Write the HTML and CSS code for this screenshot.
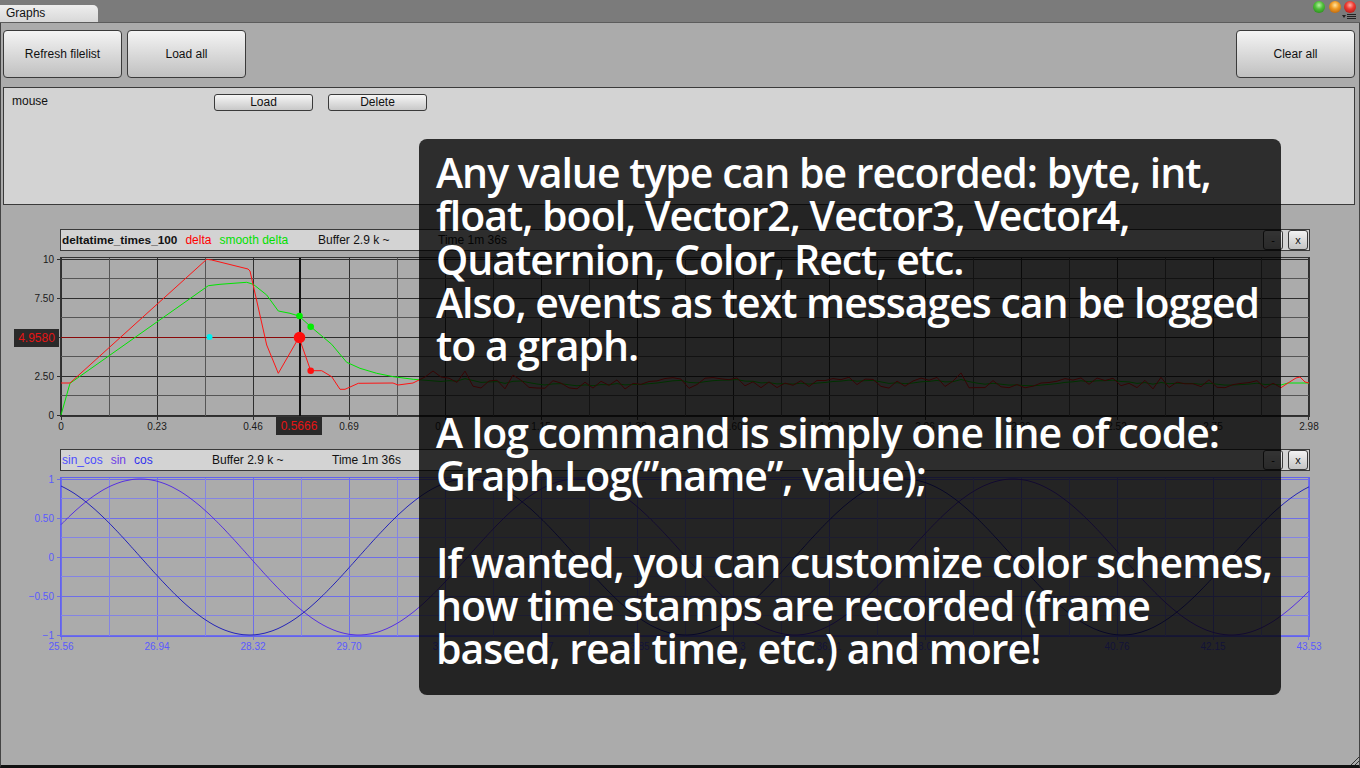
FILE: index.html
```html
<!DOCTYPE html>
<html>
<head>
<meta charset="utf-8">
<title>Graphs</title>
<link rel="stylesheet" href="styles.css">
</head>
<body>
<div class="tabbar">
  <div class="tab">Graphs</div>
  <div class="winctl">
    <div class="lights"><span class="light green"></span><span class="light orange"></span><span class="light red"></span></div>
    <svg class="menuicon" width="14" height="6" viewBox="0 0 14 6"><path d="M0 1h4l-2 3z" fill="#222"/><path d="M5 0.5h9M5 2.5h9M5 4.5h9" stroke="#222" stroke-width="1"/></svg>
  </div>
</div>
<div class="window">
  <div class="toolbar">
    <button class="btn big">Refresh filelist</button>
    <button class="btn big">Load all</button>
    <div class="spacer"></div>
    <button class="btn big">Clear all</button>
  </div>
  <div class="filelist">
    <div class="filerow"><span class="fname">mouse</span><button class="btn small">Load</button><button class="btn small">Delete</button></div>
  </div>

  <div class="graph first">
    <div class="ghead">
      <span class="series w1"><span class="gname">deltatime_times_100</span><span class="s c-red">delta</span><span class="s c-green">smooth delta</span></span>
      <span class="buf">Buffer 2.9 k ~</span>
      <span class="time">Time 1m 36s</span>
      <span class="hbtns"><button class="hbtn">-</button><button class="hbtn">x</button></span>
    </div>
    <div class="gbody">
      <div class="yaxis dark"><span>10</span><span>7.50</span><span></span><span>2.50</span><span>0</span></div>
      <svg class="plot" width="1255" height="164" viewBox="56 257 1255 164">
        <path d="M61.5 258v158M157.5 258v158M253.5 258v158M349.5 258v158M445.5 258v158M541.5 258v158M637.5 258v158M733.5 258v158M829.5 258v158M925.5 258v158M1021.5 258v158M1117.5 258v158M1213.5 258v158M1308.5 258v158M61 259.5h1248M61 298.5h1248M61 376.5h1248M61 415.5h1248" stroke="#2e2e2e" stroke-width="1" fill="none"/>
        <path d="M109.5 258v158M205.5 258v158M397.5 258v158M493.5 258v158M589.5 258v158M685.5 258v158M781.5 258v158M877.5 258v158M973.5 258v158M1069.5 258v158M1165.5 258v158M1261.5 258v158M61 278.5h1248M61 317.5h1248M61 356.5h1248M61 395.5h1248" stroke="#555" stroke-width="1" fill="none"/>
        <path d="M299.5 337.5H1309" stroke="#2e2e2e" stroke-width="1"/>
        <path d="M57 259.5h4M57 298.5h4M57 337.5h4M57 376.5h4M57 415.5h4M61.5 416v4M157.5 416v4M253.5 416v4M349.5 416v4M445.5 416v4M541.5 416v4M637.5 416v4M733.5 416v4M829.5 416v4M925.5 416v4M1021.5 416v4M1117.5 416v4M1213.5 416v4M1308.5 416v4" stroke="#2e2e2e" stroke-width="1"/>
        <rect x="60.5" y="257.5" width="1249" height="159" fill="none" stroke="#333"/>
        <path d="M61 337.5H299" stroke="#8a0a0a" stroke-width="1"/>
        <path d="M300 258V416" stroke="#111" stroke-width="2"/>
        <polyline id="green" fill="none" stroke="#00e600" stroke-width="1" points=""/>
        <polyline id="red" fill="none" stroke="#ff1414" stroke-width="1" points=""/>
        <circle cx="209.5" cy="337" r="3" fill="#00f0f0"/>
        <circle cx="299.5" cy="316" r="3.3" fill="#00ee00"/>
        <circle cx="310.7" cy="326.7" r="3.3" fill="#00ee00"/>
        <circle cx="310.7" cy="370.7" r="3.3" fill="#ff1010"/>
        <circle cx="299.5" cy="337.5" r="5.8" fill="#ff0d0d"/>
      </svg>
    </div>
    <div class="xaxis dark"><span>0</span><span>0.23</span><span>0.46</span><span>0.69</span><span>0.92</span><span>1.15</span><span>1.38</span><span>1.60</span><span>1.83</span><span>2.06</span><span>2.29</span><span>2.52</span><span>2.75</span><span>2.98</span></div>
    <div class="tag tag-y">4.9580</div>
    <div class="tag tag-x">0.5666</div>
  </div>

  <div class="graph">
    <div class="ghead">
      <span class="series w2"><span class="s0 c-blue1">sin_cos</span><span class="s c-sin">sin</span><span class="s c-cos">cos</span></span>
      <span class="buf">Buffer 2.9 k ~</span>
      <span class="time">Time 1m 36s</span>
      <span class="hbtns"><button class="hbtn">-</button><button class="hbtn">x</button></span>
    </div>
    <div class="gbody">
      <div class="yaxis blue"><span>1</span><span>0.50</span><span>0</span><span>&minus;0.50</span><span>&minus;1</span></div>
      <svg class="plot" width="1255" height="164" viewBox="56 477 1255 164">
        <path d="M61.5 478v158M157.5 478v158M253.5 478v158M349.5 478v158M445.5 478v158M541.5 478v158M637.5 478v158M733.5 478v158M829.5 478v158M925.5 478v158M1021.5 478v158M1117.5 478v158M1213.5 478v158M1308.5 478v158M61 479.5h1248M61 518.5h1248M61 557.5h1248M61 596.5h1248M61 635.5h1248" stroke="#6e6ee8" stroke-width="1" fill="none"/>
        <path d="M109.5 478v158M205.5 478v158M301.5 478v158M397.5 478v158M493.5 478v158M589.5 478v158M685.5 478v158M781.5 478v158M877.5 478v158M973.5 478v158M1069.5 478v158M1165.5 478v158M1261.5 478v158M61 498.5h1248M61 537.5h1248M61 576.5h1248M61 615.5h1248" stroke="#8484e4" stroke-width="1" fill="none"/>
        <path d="M57 479.5h4M57 518.5h4M57 557.5h4M57 596.5h4M57 635.5h4M61.5 636v4M157.5 636v4M253.5 636v4M349.5 636v4M445.5 636v4M541.5 636v4M637.5 636v4M733.5 636v4M829.5 636v4M925.5 636v4M1021.5 636v4M1117.5 636v4M1213.5 636v4M1308.5 636v4" stroke="#6e6ee8" stroke-width="1"/>
        <rect x="60.5" y="477.5" width="1249" height="159" fill="none" stroke="#6262ee"/>
        <polyline id="sin" fill="none" stroke="#5630e0" stroke-width="1" points=""/>
        <polyline id="cos" fill="none" stroke="#2424b8" stroke-width="1" points=""/>
      </svg>
    </div>
    <div class="xaxis blue"><span>25.56</span><span>26.94</span><span>28.32</span><span>29.70</span><span>31.08</span><span>32.47</span><span>33.85</span><span>35.23</span><span>36.61</span><span>38.00</span><span>39.38</span><span>40.76</span><span>42.15</span><span>43.53</span></div>
  </div>

  <svg class="grip" width="9" height="9" viewBox="0 0 9 9"><path d="M1 9L9 1M5 9L9 5" stroke="#333" stroke-width="1"/></svg>
</div>

<div class="overlay">Any value type can be recorded: byte, int,<br>float, bool, Vector2, Vector3, Vector4,<br>Quaternion, Color, Rect, etc.<br>Also, events as text messages can be logged<br>to a graph.<br><br>A log command is simply one line of code:<br>Graph.Log(”name”, value);<br><br>If wanted, you can customize color schemes,<br>how time stamps are recorded (frame<br>based, real time, etc.) and more!</div>

<script src="script.js"></script>
</body>
</html>
```

FILE: styles.css
```css
* { box-sizing: border-box; }
html, body { margin: 0; height: 768px; overflow: hidden; }
body {
  background: #ababab;
  font-family: "Liberation Sans", Arial, sans-serif;
  font-size: 12px;
  color: #111;
  position: relative;
}

/* tab bar */
.tabbar {
  height: 23px;
  background: #7b7b7b;
  border-bottom: 1px solid #5c5c5c;
  display: flex;
  justify-content: space-between;
  align-items: flex-end;
}
.tab {
  width: 98px;
  height: 17px;
  background: linear-gradient(#eeeeee, #d8d8d8);
  border-top-right-radius: 5px;
  padding-left: 6px;
  line-height: 17px;
  font-size: 12px;
  color: #111;
}
.winctl {
  align-self: flex-start;
  display: flex;
  flex-direction: column;
  align-items: flex-end;
  padding: 0 4px 0 0;
}
.lights { display: flex; gap: 3.5px; margin-top: 1px; }
.light { width: 12px; height: 12px; border-radius: 50%; display: block; }
.light.green { background: radial-gradient(circle at 50% 35%, #b6f0a0 0, #4fbf3a 40%, #1f7a14 100%); }
.light.orange { background: radial-gradient(circle at 50% 35%, #ffe3a0 0, #f09a22 40%, #a8550a 100%); }
.light.red { background: radial-gradient(circle at 50% 35%, #ffb0a8 0, #ee3a30 40%, #9a1010 100%); }
.menuicon { display: block; margin-top: 1px; margin-right: 0; }

/* window */
.window {
  height: 745px;
  border-left: 1px solid #444;
  border-right: 1px solid #444;
  border-bottom: 3px solid #111;
  padding: 7px 4px 0 2px;
  position: relative;
}
.toolbar { display: flex; gap: 5px; }
.spacer { flex: 1; }
.btn {
  font-family: "Liberation Sans", Arial, sans-serif;
  font-size: 12px;
  color: #111;
  border: 1px solid #3a3a3a;
  border-radius: 4px;
  background: linear-gradient(#f4f4f4, #c0c0c0);
  padding: 0;
  margin: 0;
}
.btn.big { width: 119px; height: 48px; }
.btn.small { width: 99px; height: 17px; border-radius: 3px; line-height: 15px; background: linear-gradient(#f6f6f6, #c8c8c8); }
.btn.small + .btn.small { margin-left: 15px; }

.filelist {
  margin-top: 9px;
  height: 118px;
  border: 1px solid #3a3a3a;
  background: #d3d3d3;
  padding: 6px 0 0 8px;
}
.filerow { display: flex; align-items: center; height: 17px; }
.fname { width: 202px; margin-top: -3px; }

/* graphs */
.graph { position: relative; margin-top: 16px; }
.graph.first { margin-top: 24px; }
.ghead {
  margin-left: 57px;
  width: 1250px;
  height: 22px;
  border: 1px solid #3a3a3a;
  background: #d3d3d3;
  display: flex;
  align-items: center;
  padding: 0 1px 0 1px;
  white-space: nowrap;
}
.series { display: flex; align-items: center; }
.series.w1 { width: 256px; }
.series.w2 { width: 150px; }
.gname { font-weight: bold; font-size: 11.8px; color: #111; }
.s { margin-left: 8px; }
.c-red { color: #ff0000; }
.c-green { color: #00e000; }
.c-blue1 { color: #4d4dff; }
.c-sin { color: #7040e6; }
.c-cos { color: #3030ee; }
.buf { width: 120px; }
.time { flex: 1; }
.hbtns { display: flex; gap: 5px; }
.hbtn {
  width: 20px;
  height: 20px;
  padding: 0;
  margin: 0;
  border: 1px solid #3a3a3a;
  border-radius: 3px;
  background: linear-gradient(#f2f2f2, #c4c4c4);
  font-family: "Liberation Sans", Arial, sans-serif;
  font-size: 11px;
  color: #111;
  line-height: 17px;
}

.gbody { display: flex; margin-top: 6px; height: 164px; }
.yaxis {
  width: 53px;
  flex: none;
  display: flex;
  flex-direction: column;
  margin-top: -17.5px;
}
.yaxis span {
  flex: none;
  height: 39px;
  line-height: 39px;
  text-align: right;
  padding-right: 2px;
  font-size: 10px;
}
.plot { display: block; flex: none; }
.xaxis { display: flex; margin-left: 10px; height: 12px; }
.xaxis span { width: 96px; flex: none; text-align: center; font-size: 10px; line-height: 12px; }
.dark { color: #1a1a1a; }
.blue { color: #5a5aff; }

.tag {
  position: absolute;
  background: #2a2a2a;
  color: #e41414;
  font-size: 12px;
  height: 18px;
  line-height: 18px;
  text-align: center;
}
.tag-y { left: 11px; top: 100px; width: 45px; }
.tag-x { left: 273px; top: 188px; width: 46px; }

.grip { position: absolute; right: 0; bottom: 0; display: block; }

/* overlay */
.overlay {
  position: absolute;
  left: 419px;
  top: 139px;
  width: 862px;
  height: 556px;
  border-radius: 8px;
  background: rgba(0, 0, 0, 0.79);
  color: #fff;
  font-family: "Open Sans", "Noto Sans", sans-serif;
  font-weight: 600;
  font-size: 41px;
  line-height: 43.3px;
  letter-spacing: -1px;
  padding: 12px 0 0 17px;
  white-space: nowrap;
}
```

FILE: script.js
```js
(function () {
  function fmt(a) {
    return a.map(function (p) { return p[0].toFixed(1) + ',' + p[1].toFixed(1); }).join(' ');
  }
  var seed = 12345;
  function rnd() { seed = (seed * 16807) % 2147483647; return seed / 2147483647; }

  var red = [[61,383],[70,383],[206.7,259.3],[211.7,260],[248,269],[250,271],[266.7,345],[278.3,373.3],[299,337.3],[310.7,370.7],[321.7,370.7],[331.7,376.7],[340,389.3],[345,389.3],[358.3,383.3],[393,383],[398,385],[413,383],[425,377],[433,371],[441,377]];
  var green = [[61,415],[70,383.3],[208.3,285.7],[220,284.3],[246.7,282.3],[253.3,284.3],[266.7,295],[278.3,311],[290,313.3],[299,316],[310.7,326.7],[331.7,344.3],[346.7,362.3],[360,368.3],[376.7,373.3],[393.3,376.7],[413.3,379.3],[441,381.5]];
  var g = 381.5;
  for (var x = 449; x <= 1281; x += 8) {
    var r = 383 + (rnd() - 0.5) * 12;
    if (rnd() < 0.1) r -= 6;
    red.push([x, r]);
    g = g * 0.75 + r * 0.25;
    green.push([x, g]);
  }
  red.push([1288, 383], [1296, 378], [1300, 377], [1305, 382], [1309, 383]);
  green.push([1288, 383], [1309, 383]);
  document.getElementById('red').setAttribute('points', fmt(red));
  document.getElementById('green').setAttribute('points', fmt(green));

  var sinP = [], cosP = [];
  for (var px = 61; px <= 1309; px += 2) {
    var t = 25.56 + (px - 61) * (43.53 - 25.56) / 1248;
    sinP.push([px, 557 - 78 * Math.sin(t)]);
    cosP.push([px, 557 - 78 * Math.cos(t)]);
  }
  document.getElementById('sin').setAttribute('points', fmt(sinP));
  document.getElementById('cos').setAttribute('points', fmt(cosP));
})();
```
